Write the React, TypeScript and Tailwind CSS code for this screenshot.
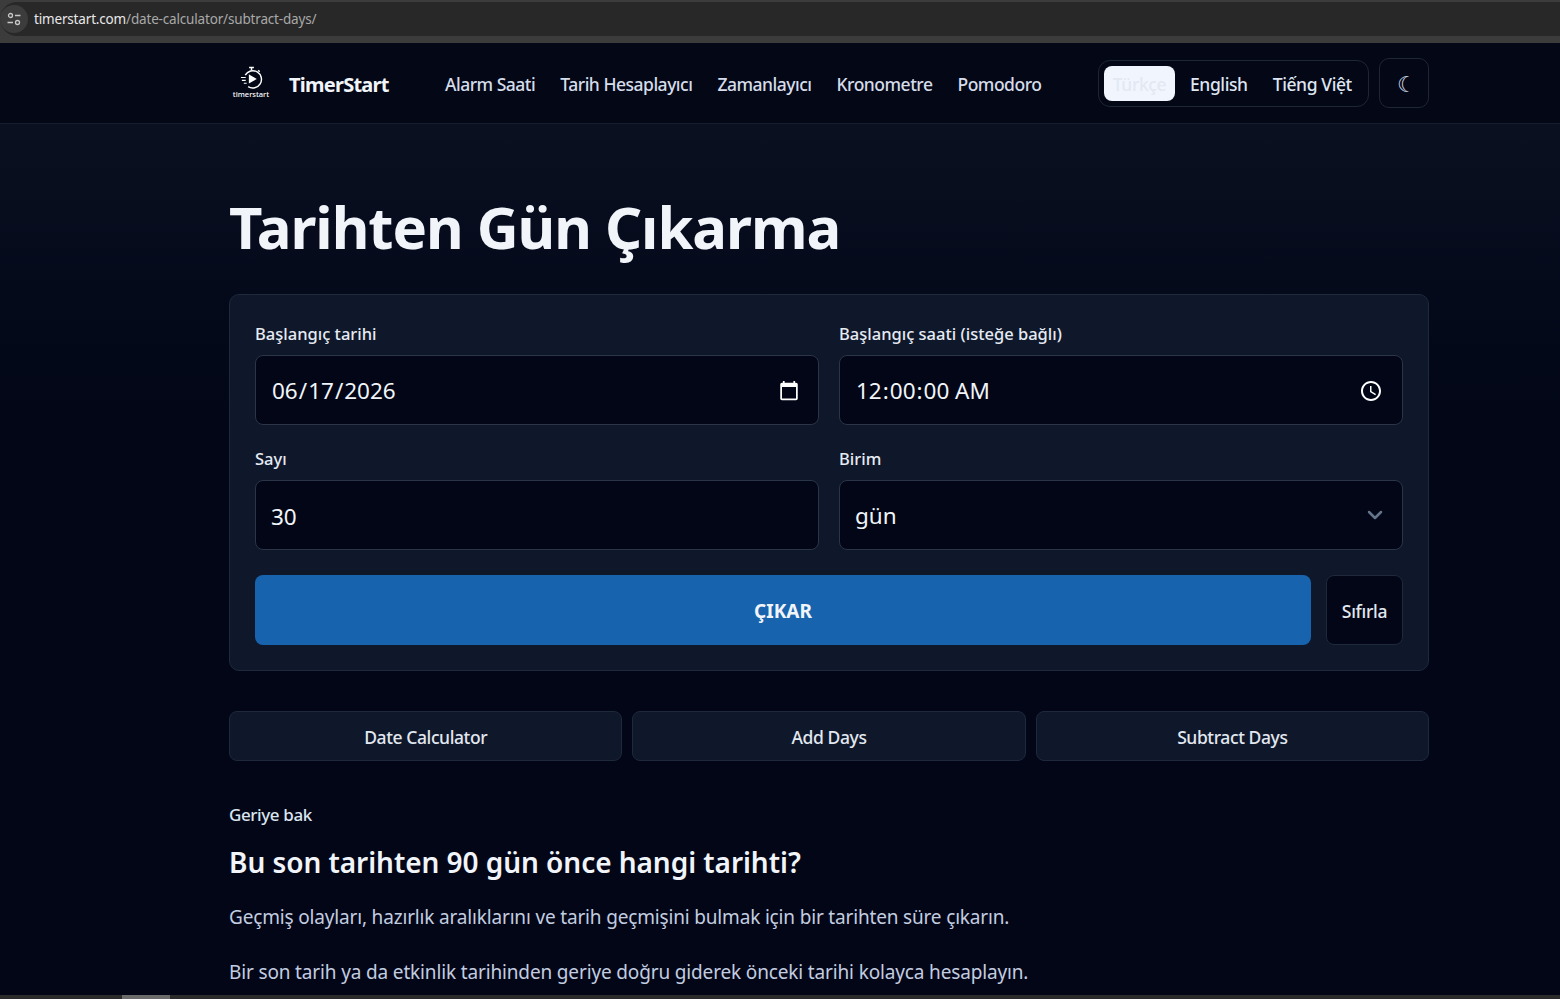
import { ChevronDownIcon } from "lucide-react";

const NAV_LINKS = [
  "Alarm Saati",
  "Tarih Hesaplayıcı",
  "Zamanlayıcı",
  "Kronometre",
  "Pomodoro",
];

const QUICK_LINKS = ["Date Calculator", "Add Days", "Subtract Days"];

const FONT = "font-['Noto_Sans',sans-serif]";
const FIELD =
  "h-[70px] w-full rounded-[8px] border border-[#2a3547] bg-[#020617] pt-[2px] pr-4 pl-[15px] text-[22.5px] text-[#f1f5f9] outline-none [color-scheme:dark]";

const SiteOptions = () => (
  <svg
    className="size-4 text-[#c8c8c8]"
    fill="none"
    stroke="currentColor"
    strokeWidth="1.3"
    viewBox="0 0 16 16"
  >
    <circle cx="4.5" cy="4.5" r="2" />
    <path d="M9 4.5h5.5M1.5 11.5H7" />
    <circle cx="11.5" cy="11.5" r="2" />
  </svg>
);

const Logo = () => (
  <div className="flex w-[44px] flex-col items-center pb-[4px]">
    <svg
      className="size-[25px] text-white"
      fill="none"
      stroke="currentColor"
      strokeWidth="1.5"
      viewBox="0 0 26 26"
    >
      <path d="M6.5 10.5a9 9 0 1 1 3 12" />
      <path d="M10.5 2.5h5M13 2.5v3M20 5.5l1.5 1.5" />
      <path d="M11 11l6 3.5-6 3.5z" fill="currentColor" />
      <path d="M2 13h5M3 16h4M5 19h3" strokeWidth="1.2" />
    </svg>
    <span className="text-[7.5px] leading-[8px] font-medium text-white">
      timerstart
    </span>
  </div>
);

const Header = () => (
  <header className="h-[81px] border-b border-[#151d2e] bg-[#030716]">
    <div className="ml-[229px] flex h-[80px] w-[1200px] items-center">
      <Logo />
      <span className="ml-[16px] w-[156px] pt-[3px] text-[20px] font-bold tracking-[-0.75px] text-[#f1f5f9]">
        TimerStart
      </span>
      <nav className="flex gap-[25px] pt-[2px] text-[17.5px] font-medium tracking-[-0.5px] text-[#d5dcea]">
        {NAV_LINKS.map((link) => (
          <span key={link}>{link}</span>
        ))}
      </nav>
      <div className="ml-auto flex h-[47px] w-[271px] items-center rounded-[12px] border border-[#1e2636] pl-[5px] text-[17.5px] font-medium tracking-[-0.4px] text-[#dfe6f2]">
        <span className="flex h-[35px] w-[71px] items-center justify-center rounded-[8px] bg-[#f1f6fe] pt-[2px] text-[#e3e8f2]">
          Türkçe
        </span>
        <span className="ml-[15px] pt-[2px]">English</span>
        <span className="ml-[25px] pt-[2px]">Tiếng Việt</span>
      </div>
      <div className="ml-[10px] flex size-[50px] items-center justify-center rounded-[10px] border border-[#1e2636] pl-[5px] text-[22px] text-[#cbd5e1]">
        ☾
      </div>
    </div>
  </header>
);

const Field = ({
  label,
  children,
}: {
  label: string;
  children: React.ReactNode;
}) => (
  <label className="flex flex-col gap-[8px]">
    <span className="h-[27px] text-[16.5px] leading-[27px] font-medium text-[#e6ebf4]">
      {label}
    </span>
    {children}
  </label>
);

const Calculator = () => (
  <section className="mt-[33px] rounded-[10px] border border-[#1e293b] bg-[#0f172a] p-[25px]">
    <div className="grid grid-cols-2 gap-x-[20px] gap-y-[20px]">
      <Field label="Başlangıç tarihi">
        <input className={FIELD} defaultValue="2026-06-17" type="date" />
      </Field>
      <Field label="Başlangıç saati (isteğe bağlı)">
        <input
          className={FIELD}
          defaultValue="00:00:00"
          step="1"
          type="time"
        />
      </Field>
      <Field label="Sayı">
        <input className={FIELD} defaultValue="30" type="text" />
      </Field>
      <Field label="Birim">
        <div className="relative">
          <select className={`${FIELD} appearance-none`} defaultValue="gun">
            <option value="gun">gün</option>
          </select>
          <ChevronDownIcon
            className="pointer-events-none absolute top-[23px] right-[16px] size-[24px] text-[#64748b]"
            strokeWidth={2.5}
          />
        </div>
      </Field>
    </div>
    <div className="mt-[25px] flex gap-[15px]">
      <button className="h-[70px] flex-1 rounded-[8px] bg-[#1763ad] pt-[2px] text-[19px] font-bold text-[#f1f5f9]">
        ÇIKAR
      </button>
      <button className="h-[70px] w-[77px] rounded-[8px] border border-[#1e293b] bg-[#020617] pt-[2px] text-[17.5px] font-medium tracking-[-0.3px] text-[#e2e8f0]">
        Sıfırla
      </button>
    </div>
  </section>
);

export default function App() {
  return (
    <div className={`flex h-[999px] flex-col overflow-hidden bg-[#020617] ${FONT}`}>
      <div className="h-[43px] shrink-0 bg-[#3c3c3c] pt-[2px]">
        <div className="flex h-[34px] items-center rounded-l-full bg-[#282828]">
          <span className="flex size-[28px] items-center justify-center rounded-full bg-[#3c3c3c]">
            <SiteOptions />
          </span>
          <span className="ml-[6px] text-[13.5px] tracking-[-0.17px] text-[#a8a8a8]">
            <span className="text-[#e8e8e8]">timerstart.com</span>
            /date-calculator/subtract-days/
          </span>
        </div>
      </div>
      <Header />
      <main className="flex-1 overflow-hidden bg-gradient-to-b from-[#0a1020] to-[#020617] to-[35%]">
        <div className="ml-[229px] w-[1200px] pt-[69px]">
          <h1 className="h-[68px] text-[58px] leading-[68px] font-bold tracking-[-1.05px] text-[#f1f5f9]">
            Tarihten Gün Çıkarma
          </h1>
          <Calculator />
          <div className="mt-[40px] grid grid-cols-3 gap-[10px]">
            {QUICK_LINKS.map((link) => (
              <div
                className="flex h-[50px] items-center justify-center rounded-[8px] border border-[#1e293b] bg-[#0f172a] pt-[2px] text-[17.5px] font-medium tracking-[-0.4px] text-[#e2e8f0]"
                key={link}
              >
                {link}
              </div>
            ))}
          </div>
          <p className="mt-[42px] text-[17px] leading-[24px] font-medium tracking-[-0.4px] text-[#dbe4f0]">
            Geriye bak
          </p>
          <h2 className="mt-[15px] text-[28px] leading-[40px] font-semibold tracking-[-0.05px] text-[#f1f5f9]">
            Bu son tarihten 90 gün önce hangi tarihti?
          </h2>
          <p className="mt-[21px] text-[19px] leading-[28px] tracking-[-0.17px] text-[#c3cde0]">
            Geçmiş olayları, hazırlık aralıklarını ve tarih geçmişini bulmak
            için bir tarihten süre çıkarın.
          </p>
          <p className="mt-[27px] text-[19px] leading-[28px] tracking-[-0.15px] text-[#c3cde0]">
            Bir son tarih ya da etkinlik tarihinden geriye doğru giderek önceki
            tarihi kolayca hesaplayın.
          </p>
        </div>
      </main>
      <div className="h-[4px] shrink-0 bg-[#2b2b2b] pl-[122px]">
        <div className="h-full w-[48px] bg-[#6b6b6b]" />
      </div>
    </div>
  );
}
